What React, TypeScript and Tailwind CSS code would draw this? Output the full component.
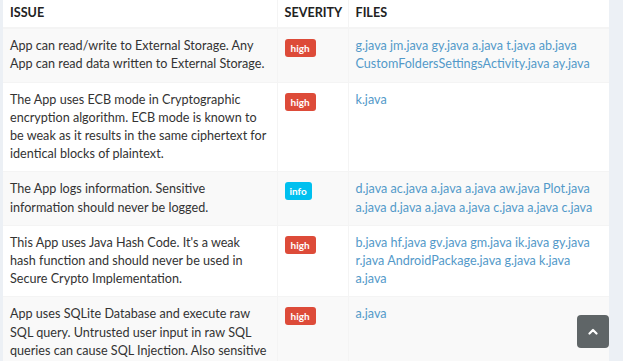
type Row = {
  issue: string[];
  severity: "high" | "info";
  files: string[][];
};

const rows: Row[] = [
  {
    issue: ["App can read/write to External Storage. Any", "App can read data written to External Storage."],
    severity: "high",
    files: [
      ["g.java", "jm.java", "gy.java", "a.java", "t.java", "ab.java"],
      ["CustomFoldersSettingsActivity.java", "ay.java"],
    ],
  },
  {
    issue: [
      "The App uses ECB mode in Cryptographic",
      "encryption algorithm. ECB mode is known to",
      "be weak as it results in the same ciphertext for",
      "identical blocks of plaintext.",
    ],
    severity: "high",
    files: [["k.java"]],
  },
  {
    issue: ["The App logs information. Sensitive", "information should never be logged."],
    severity: "info",
    files: [
      ["d.java", "ac.java", "a.java", "a.java", "aw.java", "Plot.java"],
      ["a.java", "d.java", "a.java", "a.java", "c.java", "a.java", "c.java"],
    ],
  },
  {
    issue: [
      "This App uses Java Hash Code. It's a weak",
      "hash function and should never be used in",
      "Secure Crypto Implementation.",
    ],
    severity: "high",
    files: [
      ["b.java", "hf.java", "gv.java", "gm.java", "ik.java", "gy.java"],
      ["r.java", "AndroidPackage.java", "g.java", "k.java"],
      ["a.java"],
    ],
  },
  {
    issue: [
      "App uses SQLite Database and execute raw",
      "SQL query. Untrusted user input in raw SQL",
      "queries can cause SQL Injection. Also sensitive",
    ],
    severity: "high",
    files: [["a.java"]],
  },
];

function Badge({ level }: { level: "high" | "info" }) {
  return (
    <span
      className={`inline-block h-[18px] rounded-[3px] text-[10px] font-bold leading-[18px] text-white ${
        level === "high" ? "bg-[#dd4b39] px-[6px]" : "bg-[#00c0ef] px-[5px]"
      }`}
    >
      {level}
    </span>
  );
}

export default function App() {
  return (
    <div className="relative h-[361px] overflow-hidden bg-[#ecf0f5] font-['Lato',sans-serif] text-[12.6px] leading-[18.2px] text-[#333]">
      <div className="ml-[3px] w-[606px] bg-white">
        <table className="w-full table-fixed border-collapse">
          <colgroup>
            <col className="w-[274px]" />
            <col className="w-[71px]" />
            <col />
          </colgroup>
          <thead>
            <tr className="border-b-2 border-[#f4f4f4] text-left font-bold uppercase text-[#222]">
              <th className="px-[7px] pt-[4px] pb-[5px]">Issue</th>
              <th className="border-l border-[#f4f4f4] px-[7px] pt-[4px] pb-[5px]">Severity</th>
              <th className="border-l border-[#f4f4f4] px-[7px] pt-[4px] pb-[5px]">Files</th>
            </tr>
          </thead>
          <tbody>
            {rows.map((r, i) => (
              <tr key={i} className={`border-t border-[#f4f4f4] align-top ${i % 2 === 0 ? "bg-[#f9f9f9]" : "bg-white"}`}>
                <td className="whitespace-nowrap px-[7px] py-[8px]">
                  {r.issue.map((l, j) => (
                    <div key={j}>{l}</div>
                  ))}
                </td>
                <td className="border-l border-[#f4f4f4] px-[7px] pt-[10px]">
                  <Badge level={r.severity} />
                </td>
                <td className="whitespace-nowrap border-l border-[#f4f4f4] px-[7px] py-[8px]">
                  {r.files.map((line, j) => (
                    <div key={j}>
                      {line.map((f, k) => (
                        <span key={k}>
                          <a href="#" className="text-[#5399c9]">
                            {f}
                          </a>
                          {k < line.length - 1 ? " " : ""}
                        </span>
                      ))}
                    </div>
                  ))}
                </td>
              </tr>
            ))}
          </tbody>
        </table>
      </div>
      {/* back to top */}
      <a
        href="#"
        className="absolute left-[577px] top-[315px] flex h-[33px] w-[32px] items-center justify-center rounded-[4px] bg-[#5f6567]"
      >
        <svg width="10" height="7" viewBox="0 0 10 7" fill="none">
          <path d="M1.5 5.5L5 2l3.5 3.5" stroke="white" strokeWidth="2.2" strokeLinecap="round" strokeLinejoin="round" />
        </svg>
      </a>
    </div>
  );
}
